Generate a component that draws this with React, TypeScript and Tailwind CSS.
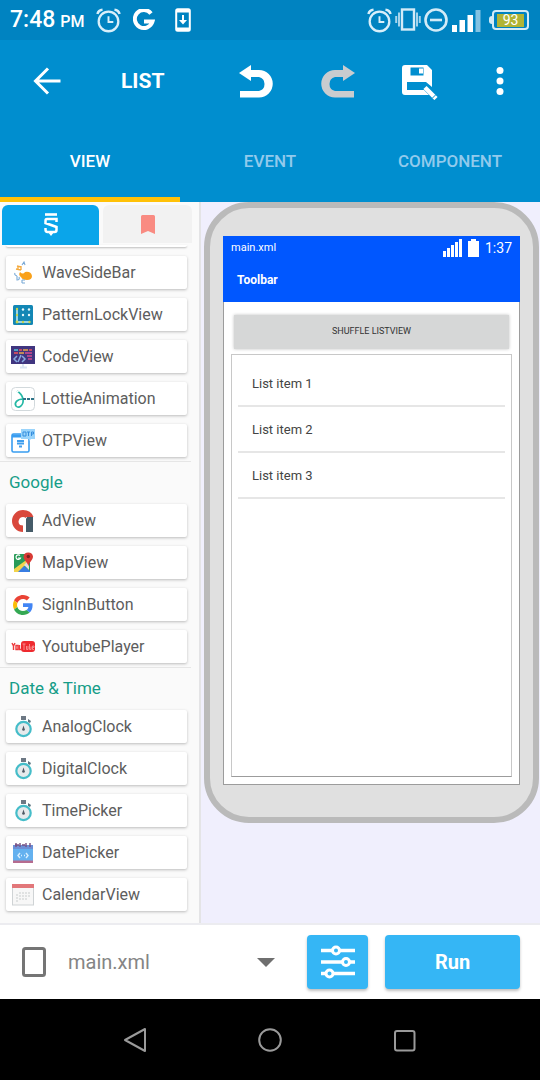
import { useState } from "react";
import type { ReactNode } from "react";

interface Widget {
  name: string;
  icon: ReactNode;
}

interface WidgetGroup {
  title: string;
  widgets: Widget[];
}

const AlarmIcon = () => (
  <svg width="25" height="25" viewBox="0 0 26 26" fill="none" stroke="#d9effa" strokeWidth="2.4">
    <circle cx="13" cy="14" r="10.2" />
    <path d="M13 8.5v6h5" strokeWidth="2" />
    <path d="M1.5 6.2Q2.5 2.2 6.8 1.8M24.5 6.2Q23.5 2.2 19.2 1.8" strokeWidth="2.6" />
  </svg>
);

const WaveIcon = () => (
  <svg width="24" height="24" viewBox="0 0 24 24" fill="none">
    <path d="M9 11q3 3 5 0 6-1 7 4 0 4-5 4-5 0-6-3-3-2-1-5z" fill="#f9a11b" />
    <path d="M6 5l4 1M5 8l5 1M10 5v4M7 5v4" stroke="#f4a93c" strokeWidth="1.3" />
    <path d="M11 4l2-3 1 3M4 12q-1 2 2 3M6 15v4q3 0 2-3M11 19h3M11 22h3M11 19v3" stroke="#79a9d6" strokeWidth="1.1" />
  </svg>
);

const PatternIcon = () => (
  <svg width="24" height="24" viewBox="0 0 24 24">
    <rect x="2" y="2" width="20" height="20" rx="1.5" fill="#1387b5" />
    <path d="M6 6v13h13" fill="none" stroke="#c9edf5" strokeWidth="1.5" />
    <g fill="#e9f8fc">
      <circle cx="12" cy="6.5" r="1.2" />
      <circle cx="18" cy="6.5" r="1.2" />
      <circle cx="12" cy="12" r="1.2" />
      <circle cx="18" cy="12" r="1.2" />
    </g>
    <g fill="#c7d54d">
      <circle cx="6" cy="6" r="1.2" />
      <circle cx="6" cy="12" r="1.2" />
      <circle cx="6" cy="19" r="1.4" />
      <circle cx="12" cy="19" r="1.2" />
      <circle cx="18.5" cy="19" r="1.2" />
    </g>
  </svg>
);

const CodeIcon = () => (
  <svg width="24" height="24" viewBox="0 0 24 24" fill="none">
    <path d="M12 18v4M9 22.5h7" stroke="#dbe5f3" strokeWidth="2" />
    <rect y="1" width="24" height="18" fill="#40357f" />
    <path d="M3 5h4" stroke="#55c7da" strokeWidth="1.5" />
    <path d="M8 5h3M18 5h3M3 8h4" stroke="#ee5360" strokeWidth="1.5" />
    <path d="M12 5h5M8 8h5" stroke="#e9a849" strokeWidth="1.5" />
    <path d="M14 8h7M16 11h5M17 14h4" stroke="#d34b91" strokeWidth="1.5" />
    <path d="M6 11l-3 3 3 3M11 11l3 3-3 3M10 10l-3 7" stroke="#87a9e0" strokeWidth="1.5" />
  </svg>
);

const LottieIcon = () => (
  <svg width="24" height="24" viewBox="0 0 24 24" fill="none">
    <rect x=".5" y=".5" width="23" height="23" rx="4" fill="#fff" stroke="#d2d9dc" />
    <path d="M6 4q5 3 6 8c1 6-4 10-7 7-2-3 1-7 7-7" stroke="#25b8a5" strokeWidth="1.7" />
    <path d="M6 4l1.3 1" stroke="#fff" strokeWidth="2" />
    <path d="M12 12h11" stroke="#2e7488" strokeWidth="1.8" strokeDasharray="3 1" />
  </svg>
);

const OtpIcon = () => (
  <svg width="24" height="24" viewBox="0 0 24 24" fill="none">
    <rect x="1" y="5" width="17" height="18" rx="1.5" stroke="#399df0" strokeWidth="1.6" />
    <path d="M1 7h17" stroke="#399df0" strokeWidth="3" />
    <path d="M10 0h14v10h-4l-2 2v-2h-8z" fill="#9ad4fb" />
    <path d="M12 3h3v4h-3zM16 3h3M17.5 3v4M20.5 7V3h2v2h-2" stroke="#348ede" strokeWidth="1" />
    <path d="M6 12h7M6 14.500h7M8 17.500h3" stroke="#3f9eee" strokeWidth="2" />
  </svg>
);

const AdIcon = () => (
  <svg width="24" height="24" viewBox="0 0 24 24">
    <path d="M1 12A11 11 0 0 1 12 1q8 0 10.5 7H15v1q-3-2-6 0-3 4 0 7l3 .5V23A11 11 0 0 1 1 12z" fill="#d9483c" />
    <path d="M16 8h6v15h-7V10z" fill="#455b68" />
  </svg>
);

const MapIcon = () => (
  <svg width="24" height="24" viewBox="0 0 24 24">
    <rect x="3" y="3" width="16" height="18" rx="1" fill="#289b58" />
    <path d="M3 18L18 7v3L8 21H3z" fill="#f2d34b" />
    <path d="M8 20l5-5 6 5v1H7z" fill="#397de3" />
    <path d="M13 14l5-5v10z" fill="#dedfe2" />
    <path d="M9 4.5a2.3 2.3 0 1 0 .5 2.5H7" fill="none" stroke="#fff" strokeWidth="1.2" />
    <path d="M12.5 5.5a4.8 4.8 0 0 1 9.5 0c0 4-4 5-4.5 10-1-5-5-6-5-10z" fill="#d83b35" />
    <circle cx="17.3" cy="5.5" r="1.7" fill="#7d211e" />
  </svg>
);

const GoogleIcon = () => (
  <svg width="20" height="20" viewBox="0 0 48 48">
    <path fill="#EA4335" d="M24 9.5c3.54 0 6.71 1.22 9.21 3.6l6.85-6.85C35.9 2.38 30.47 0 24 0 14.62 0 6.51 5.38 2.56 13.22l7.98 6.19C12.43 13.72 17.74 9.5 24 9.5z" />
    <path fill="#4285F4" d="M46.98 24.55c0-1.57-.15-3.09-.38-4.55H24v9.02h12.94c-.58 2.96-2.26 5.48-4.78 7.18l7.73 6c4.51-4.18 7.09-10.36 7.09-17.65z" />
    <path fill="#FBBC05" d="M10.53 28.59c-.48-1.45-.76-2.99-.76-4.59s.27-3.14.76-4.59l-7.98-6.19C.92 16.46 0 20.12 0 24c0 3.88.92 7.54 2.56 10.78l7.97-6.19z" />
    <path fill="#34A853" d="M24 48c6.48 0 11.93-2.13 15.89-5.81l-7.73-6c-2.15 1.45-4.92 2.3-8.16 2.3-6.26 0-11.57-4.22-13.47-9.91l-7.98 6.19C6.51 42.62 14.62 48 24 48z" />
  </svg>
);

const YoutubeIcon = () => (
  <svg width="24" height="12" viewBox="0 0 24 12">
    <rect x="10" y="0" width="14" height="11" rx="3" fill="#ee2a2f" />
    <path d="M1 2l1.5 3L4 2M2.5 5v4M5 4.5h2v4H5zM8.5 4v4.5H10" fill="none" stroke="#ee3a3d" strokeWidth="1.4" />
    <path d="M11.5 3h3M13 3v6M15.5 5v3.5H17V5M18.5 3v5.500H20V5.500M21.500 6.500H23V5h-1.500v3.500H23" fill="none" stroke="#f88a8c" strokeWidth="1" />
  </svg>
);

const StopwatchIcon = () => (
  <svg width="20" height="22" viewBox="0 0 20 22">
    <path d="M8 0h5v4H8z" fill="#6d7884" />
    <path d="M15 3l3 2-1 2-2-1z" fill="#5b7480" />
    <circle cx="10.5" cy="13" r="7.2" fill="#e6eaec" stroke="#45bdc9" strokeWidth="2.2" />
    <path d="M10.5 9.500l1.500 4.500q-1.500 1.500-3 0z" fill="#4e5964" />
  </svg>
);

const DatePickerIcon = () => (
  <svg width="22" height="22" viewBox="0 0 22 22">
    <rect x="1" y="3" width="20" height="18" fill="#64b1ef" />
    <path d="M1 3h20v4H1z" fill="#6c8fd6" />
    <path d="M1 18.5h20V21H1z" fill="#b66c8f" />
    <path d="M4 1v4M8 1v4M14 1v4M18 1v4M3 3h4M10 3h3" stroke="#774f82" strokeWidth="1.4" />
    <path d="M8 11l-2 2.500L8 16M14 11l2 2.500-2 2.500M9 13.500h1M12 13.500h1" fill="none" stroke="#d7efff" strokeWidth="1.4" />
  </svg>
);

const CalendarIcon = () => (
  <svg width="24" height="24" viewBox="0 0 24 24">
    <rect x="1.5" y="1.5" width="21" height="20.5" fill="#f7f7f7" stroke="#cfd3d5" />
    <path d="M1 1h22v4H1z" fill="#e2777a" />
    <path d="M5 12h2M8 10h2M11 10h2M14 10h2M17 10h2M5 15h2M8 13h2M11 13h2M14 13h2M17 13h2M5 18h2M8 16h2M11 16h2M14 16h2" stroke="#d9dbdc" strokeWidth="1.7" />
  </svg>
);

const SketchIcon = () => (
  <svg width="14" height="24" viewBox="0 0 14 24" fill="none" stroke="#fff">
    <path d="M1 1.5h12" strokeWidth="2.6" />
    <path d="M12.5 9V6H3Q1.5 6 1.5 8v2l11 4v3q0 2-2 2H3.5Q1.5 19 1.500 16.500V15" strokeWidth="2.5" />
    <path d="M4 19h6l-3 4z" fill="#fff" stroke="none" />
  </svg>
);

const groups: WidgetGroup[] = [
  {
    title: "",
    widgets: [
      { name: "WaveSideBar", icon: <WaveIcon /> },
      { name: "PatternLockView", icon: <PatternIcon /> },
      { name: "CodeView", icon: <CodeIcon /> },
      { name: "LottieAnimation", icon: <LottieIcon /> },
      { name: "OTPView", icon: <OtpIcon /> },
    ],
  },
  {
    title: "Google",
    widgets: [
      { name: "AdView", icon: <AdIcon /> },
      { name: "MapView", icon: <MapIcon /> },
      { name: "SignInButton", icon: <GoogleIcon /> },
      { name: "YoutubePlayer", icon: <YoutubeIcon /> },
    ],
  },
  {
    title: "Date & Time",
    widgets: [
      { name: "AnalogClock", icon: <StopwatchIcon /> },
      { name: "DigitalClock", icon: <StopwatchIcon /> },
      { name: "TimePicker", icon: <StopwatchIcon /> },
      { name: "DatePicker", icon: <DatePickerIcon /> },
      { name: "CalendarView", icon: <CalendarIcon /> },
    ],
  },
];

const tabs = ["VIEW", "EVENT", "COMPONENT"];

const StatusBar = () => (
  <div className="flex h-10 items-center justify-between bg-[#0083c1] pr-[11px] pl-[10px] text-white">
    <div className="flex items-center">
      <span className="text-[23px] leading-10 font-medium">7:48</span>
      <span className="mt-1 ml-[5px] text-[16px] leading-9 font-medium">PM</span>
      <div className="ml-3 flex items-center gap-3">
        <AlarmIcon />
        <svg width="22" height="22" viewBox="0 0 22 22" fill="none" stroke="#fff" strokeWidth="4">
          <path d="M18 4.5A9 9 0 1 0 19.5 12.5H11" />
        </svg>
        <svg className="ml-1" width="24" height="26" viewBox="0 0 24 26" fill="none">
          <rect x="5.2" y="2.2" width="13.6" height="21.6" rx="1.5" stroke="#fff" strokeWidth="2" />
          <path d="M5 4h14M5 22h14" stroke="#fff" strokeWidth="3" />
          <path d="M12 8v6" stroke="#fff" strokeWidth="2" />
          <path d="M8 13h8l-4 4.5z" fill="#fff" />
        </svg>
      </div>
    </div>
    <div className="flex items-center gap-[3px]">
      <AlarmIcon />
      <svg width="26" height="24" viewBox="0 0 26 24" fill="none" stroke="#d3ebf7" strokeWidth="2">
        <rect x="7" y="1.5" width="12" height="20" strokeWidth="2.4" />
        <path d="M4 4.5v14M22 4.5v14M1.2 8v7M24.8 8v7" stroke="#a5d4ec" />
      </svg>
      <svg width="24" height="24" viewBox="0 0 24 24" fill="none" stroke="#d3ebf7" strokeWidth="2.6">
        <circle cx="12" cy="12" r="10.5" />
        <path d="M6 12h12" />
      </svg>
      <svg className="mt-[2px]" width="30" height="22" viewBox="0 0 30 22" fill="#fff">
        <path d="M1 15h5v7H1zM8.5 10H14v12H8.5zM16.5 5H22v17h-5.5z" />
        <path d="M24.5 0h5v22h-5z" fill="#83c2e2" />
      </svg>
      <div className="ml-[5px] flex items-center">
        <div className="h-2 w-[3px] rounded-l bg-[#d3ebf7]" />
        <div className="flex h-5 w-[37px] items-center rounded-[4px] border-2 border-[#d3ebf7] px-[3px]">
          <span className="flex h-[13px] w-full items-center justify-center bg-[#b0b436] text-[14px] leading-none">
            93
          </span>
        </div>
      </div>
    </div>
  </div>
);

const AppBar = () => (
  <header className="flex h-[82px] items-center bg-[#008ecf] text-white">
    <button aria-label="Back" className="ml-[33px] flex h-10 w-7 items-center">
      <svg width="28" height="28" viewBox="0 0 28 28" fill="none" stroke="#fff" strokeWidth="3">
        <path d="M27.5 14H3M15 1.5L2.5 14 15 26.5" />
      </svg>
    </button>
    <h1 className="ml-[60px] flex-1 text-[21px] leading-7 font-bold">LIST</h1>
    <div className="grid w-[324px] grid-cols-4 items-center justify-items-center">
      <button aria-label="Undo">
        <svg width="35" height="36" viewBox="0 0 35 36" fill="#fff">
          <path d="M0 10L12 2v5h8a13.700 13.700 0 0 1 0 27.500H1V28h19a7.200 7.200 0 0 0 0-14h-8v4z" />
        </svg>
      </button>
      <button aria-label="Redo">
        <svg width="35" height="36" viewBox="0 0 35 36" fill="#c9cccf">
          <path d="M35 10L23 2v5h-8a13.700 13.700 0 0 0 0 27.500h19V28H15a7.200 7.200 0 0 1 0-14h8v4z" />
        </svg>
      </button>
      <button aria-label="Save">
        <svg width="38" height="38" viewBox="0 0 38 38">
          <path
            fill="#fff"
            fillRule="evenodd"
            d="M5 3h22l5 5v17l-6-5H7v8h17l5 5H5q-3 0-3-3V6q0-3 3-3zM10.500 5.500v8h13v-8zM19 6.500h4v5h-4z"
          />
          <path d="M25 25.500l11 11" stroke="#fff" strokeWidth="4.500" />
          <path d="M32.500 36l3.500-3.500" stroke="#008ecf" strokeWidth="1" />
        </svg>
      </button>
      <button aria-label="More options">
        <svg width="12" height="30" viewBox="0 0 12 30" fill="#fff">
          <circle cx="6" cy="4.5" r="3.5" />
          <circle cx="6" cy="15" r="3.5" />
          <circle cx="6" cy="25.5" r="3.5" />
        </svg>
      </button>
    </div>
  </header>
);

const Palette = () => (
  <aside className="w-[201px] shrink-0 border-r-2 border-[#e4e4e6] bg-[#fafafa]">
    <div className="flex gap-1 pt-[3px] pr-[7px] pl-[2px]">
      <button aria-label="Widgets" className="flex h-10 w-[97px] items-center justify-center rounded-t-md bg-[#0aa5ea]">
        <SketchIcon />
      </button>
      <button aria-label="Favorites" className="flex h-[38px] flex-1 items-center justify-center rounded-t-md bg-[#f2f2f2]">
        <svg width="14" height="19" viewBox="0 0 14 19" fill="#f98b82">
          <path d="M1.5 0h11Q14 0 14 1.5V19l-7-3-7 3V1.5Q0 0 1.5 0z" />
        </svg>
      </button>
    </div>
    <div className="mr-3 ml-[6px] h-[2px] rounded-b-sm bg-white shadow-[0_1px_2px_#00000040]" />
    <div className="mt-[9px] pb-[11px]">
      {groups.map((group) => (
        <section key={group.title}>
          {group.title && (
            <h2 className="mt-1 mr-2 h-[43px] border-t border-[#e6e6e6] pl-[9px] text-[17px] leading-10 text-[#169d88]">
              {group.title}
            </h2>
          )}
          <ul className="mr-3 ml-[6px] flex flex-col gap-[9px]">
            {group.widgets.map((widget) => (
              <li key={widget.name}>
                <button className="flex h-[33px] w-full items-center gap-[7px] rounded-xs bg-white pl-[5px] text-[16px] text-[#5d5d5d] shadow-[0_1px_3px_#00000040]">
                  <span className="flex w-6 justify-center">{widget.icon}</span>
                  {widget.name}
                </button>
              </li>
            ))}
          </ul>
        </section>
      ))}
    </div>
  </aside>
);

const Preview = () => (
  <section className="flex-1 bg-[#f0effd] pr-px pl-[3px]">
    <div className="rounded-[45px] border-[6px] border-[#bababa] bg-[#e0e0e0] px-[13px] pt-7 pb-8">
      <div className="flex h-[549px] flex-col border border-[#9c9c9c] bg-white">
        <div className="-mx-px -mt-px h-[66px] bg-[#0057ff] text-white">
          <div className="flex h-6 items-center px-2">
            <span className="flex-1 text-[11px]">main.xml</span>
            <svg width="19" height="18" viewBox="0 0 19 18" fill="#fff">
              <path d="M0 12h3v6H0zM4 9h3v9H4zM8 6h3v12H8zM12 3h3v15h-3zM16 0h3v18h-3z" />
            </svg>
            <svg className="mx-[6px]" width="11" height="18" viewBox="0 0 11 18" fill="#fff">
              <path d="M3 0h5v2h3v16H0V2h3z" />
            </svg>
            <span className="text-[14px]">1:37</span>
          </div>
          <div className="pl-[14px] text-[12px] leading-[41px] font-bold">Toolbar</div>
        </div>
        <div className="flex flex-1 flex-col px-[7px] pt-[13px] pb-[7px]">
          <button className="mx-[3px] h-[34px] bg-[#d6d7d7] text-[9px] text-[#333333] shadow-[0_0_3px_#00000040]">
            SHUFFLE LISTVIEW
          </button>
          <ul className="mt-[5px] flex-1 border border-[#c8c8c8] border-b-[#9c9c9c] px-[6px] pt-[6px] text-[13px] text-[#444444]">
            {["List item 1", "List item 2", "List item 3"].map((item) => (
              <li key={item} className="h-[46px] border-b-2 border-[#e6e6e6] pl-[14px] leading-[46px]">
                {item}
              </li>
            ))}
          </ul>
        </div>
      </div>
    </div>
  </section>
);

const App = () => {
  const [activeTab, setActiveTab] = useState("VIEW");

  return (
    <div className="flex min-h-screen flex-col bg-white font-[Roboto,sans-serif]">
      <StatusBar />
      <AppBar />

      {/* Tabs */}
      <nav className="grid h-20 grid-cols-3 bg-[#008ecf]">
        {tabs.map((tab) => (
          <button
            key={tab}
            onClick={() => setActiveTab(tab)}
            className={`border-y-5 border-t-transparent text-[17px] font-medium ${
              activeTab === tab
                ? "border-b-[#ffc107] text-white"
                : "border-b-transparent text-[#92caec]"
            }`}
          >
            {tab}
          </button>
        ))}
      </nav>

      <main className="flex flex-1">
        <Palette />
        <Preview />
      </main>

      {/* File selector and run */}
      <footer className="flex h-[76px] items-center border-t-2 border-[#ececf0] bg-white pr-5 pl-[21px]">
        <svg width="26" height="32" viewBox="0 0 26 32" fill="none" stroke="#757575" strokeWidth="3">
          <rect x="2.5" y="2.5" width="21" height="27" rx="2" />
        </svg>
        <div className="relative ml-[21px] flex-1">
          <select
            aria-label="File"
            className="h-10 w-full appearance-none bg-transparent text-[20px] text-[#858585]"
          >
            <option>main.xml</option>
          </select>
          <svg
            className="pointer-events-none absolute top-4 right-8"
            width="18"
            height="9"
            viewBox="0 0 18 9"
            fill="#6f6f6f"
          >
            <path d="M0 0h18L9 9z" />
          </svg>
        </div>
        <button
          aria-label="Settings"
          className="flex h-[54px] w-[61px] items-center justify-center rounded-sm bg-[#35b6f5] shadow-[0_2px_3px_#00000040]"
        >
          <svg width="36" height="36" viewBox="0 0 36 36" fill="#35b6f5" stroke="#fff" strokeWidth="3.5">
            <path d="M1 6.500h34M1 18h34M1 29.500h34" />
            <circle cx="16" cy="6.5" r="3.5" strokeWidth="3" />
            <circle cx="26" cy="18" r="3.5" strokeWidth="3" />
            <circle cx="9.5" cy="29.5" r="3.5" strokeWidth="3" />
          </svg>
        </button>
        <button className="ml-[17px] h-[54px] w-[135px] rounded-sm bg-[#35b6f5] text-[20px] font-bold text-white shadow-[0_2px_3px_#00000040]">
          Run
        </button>
      </footer>

      {/* System navigation */}
      <div className="flex h-[81px] items-center justify-center gap-[111px] bg-black">
        <button aria-label="System back">
          <svg width="24" height="26" viewBox="0 0 24 26" fill="none" stroke="#9a9a9a" strokeWidth="2" strokeLinejoin="round">
            <path d="M22 2v22L2 13z" />
          </svg>
        </button>
        <button aria-label="Home">
          <svg width="24" height="26" viewBox="0 0 24 26" fill="none" stroke="#9a9a9a" strokeWidth="2">
            <circle cx="12" cy="13" r="10.8" />
          </svg>
        </button>
        <button aria-label="Recent apps">
          <svg width="24" height="26" viewBox="0 0 24 26" fill="none" stroke="#9a9a9a" strokeWidth="2">
            <rect x="2" y="4" width="19.5" height="19.5" rx="2" />
          </svg>
        </button>
      </div>
    </div>
  );
};

export default App;
